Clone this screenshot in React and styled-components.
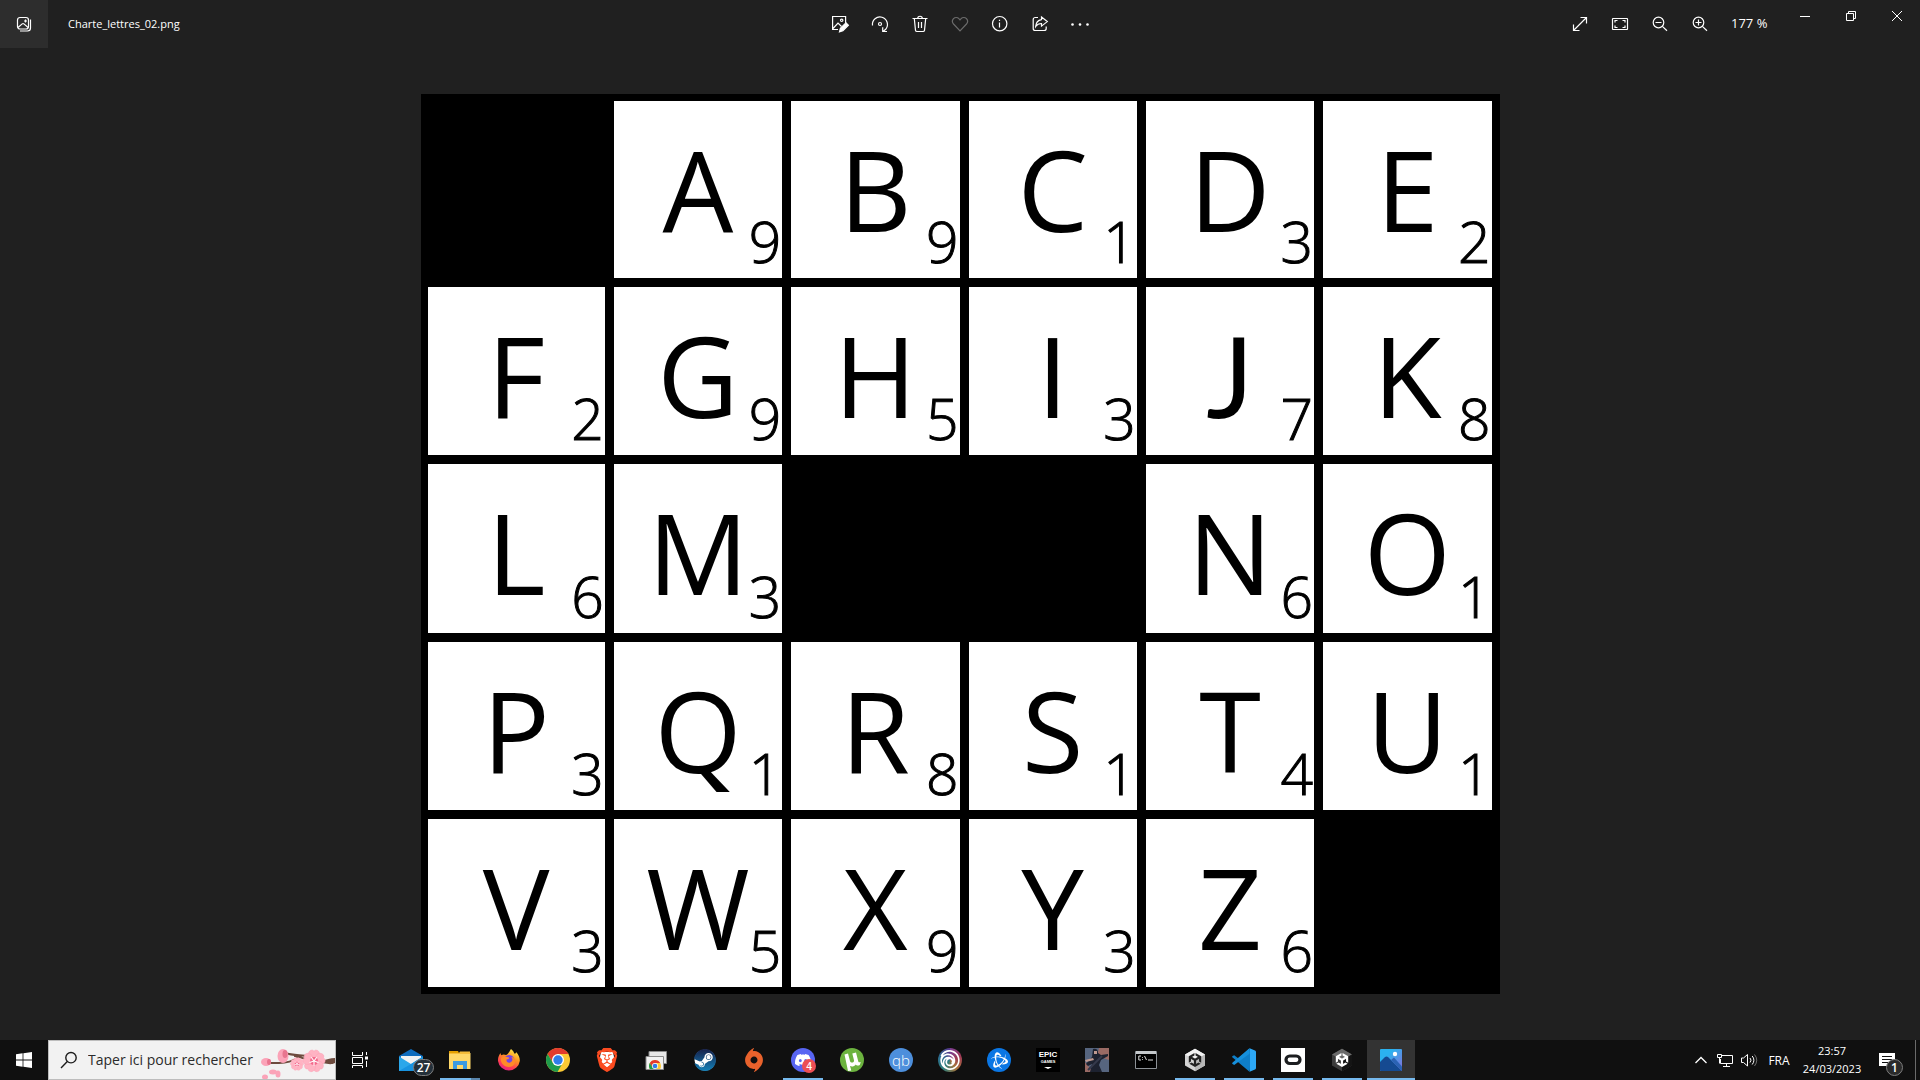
import React from "react";
import styled, { createGlobalStyle, css } from "styled-components";
import { SiSteam, SiDiscord, SiUbisoft, SiBattledotnet, SiUnity, SiBrave, SiOrigin } from "react-icons/si";

const GlobalStyle = createGlobalStyle`
  * { box-sizing: border-box; }
  body { margin: 0; background: #202020; }
  button, input { font: inherit; color: inherit; border: 0; background: none; padding: 0; margin: 0; }
`;

const Desktop = styled.div`
  min-height: 100vh;
  display: flex;
  flex-direction: column;
  background: #202020;
  color: #fff;
  font-family: "Open Sans", "Noto Sans", sans-serif;
  font-size: 12px;
`;

/* ---------- Photo viewer ---------- */

const TitleBar = styled.header`
  display: grid;
  grid-template-columns: 1fr auto 1fr;
  height: 48px;
`;

const TitleGroup = styled.div`
  display: flex;
  align-items: center;
  gap: 20px;
`;

const FileName = styled.span`
  font-size: 11px;
  line-height: 16px;
`;

const Tools = styled.nav`
  display: flex;
  justify-content: ${(p) => (p.$end ? "flex-end" : "center")};
`;

const ToolButton = styled.button`
  width: ${(p) => (p.$wide ? 48 : 40)}px;
  height: 48px;
  display: grid;
  place-items: center;
  background: ${(p) => (p.$lit ? "#2d2d2d" : "transparent")};
  color: ${(p) => (p.$dim ? "#6b6b6b" : "#fff")};
`;

const ZoomLevel = styled.output`
  width: 62px;
  padding-left: 11px;
  line-height: 46px;
  font-size: 13px;
`;

const WindowButton = styled.button`
  width: 46px;
  height: 32px;
  display: grid;
  place-items: center;
`;

const Viewer = styled.main`
  flex: 1;
  display: grid;
  place-items: center;
`;

const Board = styled.section`
  height: calc(100vh - 180px);
  aspect-ratio: 1079 / 900;
  display: grid;
  grid-template-columns: 177fr repeat(5, 168fr);
  grid-template-rows: 177fr repeat(4, 168fr);
  gap: 9px;
  padding: 7px 8px 7px 7px;
  background: #000;
`;

const Tile = styled.div`
  display: grid;
  min-width: 0;
  min-height: 0;
  background: ${(p) => (p.$blank ? "#000" : "#fff")};
  color: #000;
`;

const Letter = styled.span`
  grid-area: 1 / 1;
  justify-self: center;
  align-self: start;
  padding-top: 8px;
  font-family: ${(p) => (p.$shortTail ? "Lato" : '"Open Sans"')}, sans-serif;
  font-size: 112px;
  line-height: 160px;
`;

const Points = styled.span`
  grid-area: 1 / 1;
  justify-self: end;
  align-self: end;
  padding: 0 1px 1px 0;
  font-size: 57px;
  font-weight: 300;
  line-height: 72px;
  -webkit-text-stroke: 1px #000;
`;

/* ---------- Taskbar ---------- */

const Taskbar = styled.footer`
  height: 40px;
  display: flex;
  background: #101010;
`;

const SearchBox = styled.label`
  width: 288px;
  display: flex;
  align-items: center;
  padding-left: 11px;
  border: 1px solid #bdbdbd;
  background: #f2f2f2;
  color: #1c1c1c;
  overflow: hidden;
  svg { flex: none; }
`;

const SearchInput = styled.input`
  flex: 1;
  min-width: 0;
  margin-left: 10px;
  font-size: 14px;
  line-height: 24px;
  outline: 0;
  &::placeholder { color: #2b2b2b; opacity: 1; }
`;

const TaskSlot = styled.button`
  width: 48px;
  height: 40px;
  display: grid;
  place-items: center;
`;

const AppList = styled.nav`
  flex: 1;
  display: flex;
  gap: 1px;
  padding-left: 3px;
`;

const AppButton = styled(TaskSlot)`
  position: relative;
  background: ${(p) => (p.$active ? "#333" : "transparent")};
  ${(p) =>
    p.$running &&
    css`
      &::after {
        content: "";
        position: absolute;
        bottom: 0;
        left: ${p.$active ? 0 : 4}px;
        right: ${p.$active ? 0 : 4}px;
        height: 2px;
        background: ${p.$stacked
          ? "linear-gradient(90deg, #76b9ed 31px, #5a86ad 31px)"
          : "#76b9ed"};
      }
    `}
`;

const AppIcon = styled.span`
  display: grid;
  place-items: center;
  width: 24px;
  height: 24px;
  border-radius: ${(p) => (p.$round ? "50%" : "0")};
  background: ${(p) => p.$bg || "transparent"};
  color: ${(p) => p.$fg || "#fff"};
`;

const QbText = styled.span`
  font-size: 15px;
  font-weight: 300;
  line-height: 20px;
`;

const EpicText = styled.span`
  display: grid;
  justify-items: center;
  font: 700 8px/9px "Liberation Sans", sans-serif;
  small { font-size: 4px; line-height: 5px; }
`;

const Count = styled.span`
  position: absolute;
  display: grid;
  place-items: center;
  font-weight: 600;
  ${(p) =>
    p.$kind === "mail"
      ? css`left: 26px; top: 19px; width: 21px; height: 17px; border-radius: 9px; border: 1px solid #7d7d7d; background: #24303a; font-size: 12px; line-height: 14px;`
      : p.$kind === "chat"
      ? css`left: 23px; top: 19px; width: 14px; height: 14px; border-radius: 50%; background: #ed4f55; font-size: 10px; line-height: 14px;`
      : css`left: 19px; top: 19px; width: 17px; height: 17px; border-radius: 50%; border: 1px solid #7d7d7d; background: #2a2a2a; font-size: 12px; line-height: 14px;`}
`;

const Tray = styled.div`
  display: flex;
  align-items: center;
`;

const TrayButton = styled.button`
  width: 24px;
  height: 40px;
  display: grid;
  place-items: center;
`;

const Language = styled.button`
  width: 36px;
  height: 40px;
  font-size: 12px;
`;

const Clock = styled.time`
  width: 70px;
  text-align: center;
  font-size: 11px;
  line-height: 18px;
`;

const NoticeButton = styled(TaskSlot)`
  position: relative;
  width: 48px;
  padding-right: 8px;
`;

const ShowDesktop = styled.button`
  width: 5px;
  height: 40px;
  border-left: 1px solid #6a6a6a;
`;

/* ---------- Line icons ---------- */

const Line = ({ size = 20, w = 1, children }) => (
  <svg width={size} height={size} viewBox={`0 0 ${size} ${size}`} fill="none" stroke="currentColor" strokeWidth={w} aria-hidden="true">
    {children}
  </svg>
);

const icons = {
  gallery: (
    <Line w={1.2}>
      <rect x="3.5" y="3.5" width="11" height="11.5" rx="2.5" />
      <path d="M16.5 5.5v8.5a3 3 0 0 1-3 3H6M4 13.5l4.2-3.6a1.3 1.3 0 0 1 1.7 0l4.2 3.6" />
      <path d="M11.5 5.5v3M10 7h3" />
    </Line>
  ),
  edit: (
    <Line w={1.2}>
      <path d="M8 15.5H2.6v-13h13V9M3 14.5l5-5.5 3.5 3.5" />
      <circle cx="11.7" cy="6.3" r="1.2" />
      <path d="m9.5 17.8.9-3.4 5.6-5.5 2.4 2.4-5.5 5.5-3.4 1z" fill="currentColor" />
    </Line>
  ),
  rotate: (
    <Line w={1.2}>
      <path d="M2.5 11.5a7.5 7.5 0 1 1 13.2 3.8l-2.7 2.2M12.7 13.3v4.2H17" />
      <circle cx="10" cy="10" r="1.5" />
    </Line>
  ),
  trash: (
    <Line w={1.2}>
      <path d="M2.5 4.5h15M7.7 4.5c0-3 4.6-3 4.6 0M4.3 4.5l1.2 11.8a1.5 1.5 0 0 0 1.5 1.2h6a1.5 1.5 0 0 0 1.5-1.2l1.2-11.8M8.5 8v6M11.5 8v6" />
    </Line>
  ),
  heart: (
    <Line w={1.2}>
      <path d="M10 16.8 3.5 10a4 4 0 0 1 0-5.3c1.5-1.6 4-1.6 5.4 0L10 5.9l1.1-1.2c1.4-1.6 3.9-1.6 5.4 0a4 4 0 0 1 0 5.3z" />
    </Line>
  ),
  info: (
    <Line w={1.2}>
      <circle cx="9.7" cy="9.7" r="7.2" />
      <path d="M9.5 8.5v5M9.5 5.7v1.3" />
    </Line>
  ),
  share: (
    <Line w={1.2}>
      <path d="M8 3.5H5.2a2 2 0 0 0-2 2v9a2 2 0 0 0 2 2h9a2 2 0 0 0 2-2v-2" />
      <path d="M11.5 3 17.3 7.6l-5.8 4.5V9.5c-2.7 0-4.4.8-5.8 2.9.3-4 2.3-6.3 5.8-6.8z" />
    </Line>
  ),
  more: (
    <Line>
      <g fill="currentColor" stroke="none">
        <circle cx="2.5" cy="10.5" r="1.3" /><circle cx="10" cy="10.5" r="1.3" /><circle cx="17.5" cy="10.5" r="1.3" />
      </g>
    </Line>
  ),
  expand: (
    <Line w={1.2}><path d="M3.5 16.5l13-13M10.5 3.5h6v6M3.5 10.5v6h6" /></Line>
  ),
  fit: (
    <Line w={1.2}>
      <rect x="2.5" y="4.5" width="15" height="11" rx=".5" />
      <path d="M5 8.5v-2h2.5M12.5 6.5H15v2M15 11.5v2h-2.5M7.5 13.5H5v-2" />
    </Line>
  ),
  zoomOut: (
    <Line w={1.2}><circle cx="8.5" cy="8.5" r="5.3" /><path d="m12.4 12.4 4.6 4.4M5.5 8.5h6" /></Line>
  ),
  zoomIn: (
    <Line w={1.2}><circle cx="8.5" cy="8.5" r="5.3" /><path d="m12.4 12.4 4.6 4.4M5.5 8.5h6M8.5 5.5v6" /></Line>
  ),
  minimize: <Line size={10}><path d="M0 5.5h10" /></Line>,
  restore: <Line size={10}><path d="M.5 2.5h7v7h-7zM2.5 2.5v-2h7v7h-2" /></Line>,
  close: <Line size={10}><path d="m0 0 10 10M10 0 0 10" /></Line>,
  search: <Line size={18} w={1.4}><circle cx="11" cy="6.7" r="5.2" /><path d="M7.3 10.6 1 17" /></Line>,
  taskView: (
    <Line size={18}>
      <path d="M1.5 1v3.5h10V1M1.5 17v-2.5h10V17M1.5 6.5h10v6h-10zM15.5 1v3M15.5 10v6" />
      <path d="M14 5.5h3v3h-3z" fill="currentColor" stroke="none" />
    </Line>
  ),
  chevron: <Line size={14} w={1.3}><path d="m1.5 10 5.5-5.5 5.5 5.5" /></Line>,
  network: (
    <Line size={18}>
      <path d="M5.5 4.5h11v8h-12V8M10.5 12.5v3M7 15.5h7M1.5 3.5h4v3h-4zM3.5 6.5v6" />
    </Line>
  ),
  volume: (
    <Line size={18}>
      <path d="M1.5 7v4.5h2l4 3.5V3.5l-4 3.5zM10 7q2 2.2 0 4.5M12.2 5q3.4 4.2 0 8.5" />
      <path d="M14.5 3.5q4.5 5.7 0 11.5" opacity=".4" />
    </Line>
  ),
  notice: (
    <Line size={18}>
      <path d="M1 2h16v13h-4v3l-3-3H1z" fill="#fff" stroke="none" />
      <path d="M4 5.5h10M4 8.5h10M4 11.5h6" stroke="#101010" />
    </Line>
  ),
};

/* ---------- App drawings ---------- */

const Art = ({ w = 24, h = 24, children }) => (
  <svg width={w} height={h} viewBox={`0 0 ${w} ${h}`} aria-hidden="true">{children}</svg>
);

const WindowsLogo = () => (
  <Art w={16} h={16}>
    <path fill="#fff" d="M0 2.2 6.6 1.3V7.6H0zM7.4 1.2 16 0v7.6H7.4zM0 8.4h6.6v6.3L0 13.8zM7.4 8.4H16V16l-8.6-1.2z" />
  </Art>
);

const petals = [0, 72, 144, 216, 288];

const Flower = ({ x, y, r }) => (
  <g transform={`translate(${x} ${y}) scale(${r})`}>
    {petals.map((a) => (
      <path key={a} transform={`rotate(${a})`} d="M0 0C-.7-.3-.6-1-.15-1L0-.9.15-1C.6-1 .7-.3 0 0" fill="#ffb3c3" stroke="#fa9fb4" strokeWidth=".04" />
    ))}
    <circle r=".36" fill="#f4688b" />
    {petals.map((a) => (
      <path key={a} transform={`rotate(${a + 36})`} d="M0 0V-.42" stroke="#fff" strokeWidth=".1" />
    ))}
  </g>
);

const Blossom = () => (
  <Art w={74} h={38}>
    <path d="M74 19c-8 3-14 0-20 1-10 1-14-6-21-5M56 19C46 12 36 16 24 12M38 16c-6 4-12 6-20 6H8" fill="none" stroke="#6d4b3e" strokeWidth="2" />
    <path d="M74 17c-5 0-9 2-12 2v3c5 1 8 2 12 0z" fill="#6d4b3e" />
    <g fill="#fba3b8">
      <ellipse cx="5" cy="21" rx="5" ry="4" />
      <ellipse cx="22" cy="15" rx="5.5" ry="7" />
      <ellipse cx="24" cy="13" rx="2.5" ry="4" fill="#e8758f" />
      <ellipse cx="8" cy="21" rx="2" ry="3" fill="#e8758f" />
      <ellipse cx="12" cy="31" rx="4" ry="2.5" /><ellipse cx="17" cy="33" rx="2.5" ry="3.5" />
      <ellipse cx="4" cy="36" rx="3" ry="2.5" />
    </g>
    <Flower x={36} y={23} r={6.5} />
    <Flower x={53} y={20} r={11} />
  </Art>
);

const Mail = () => (
  <Art>
    <path d="M0 8 12 1l12 7v3H0z" fill="#0f6cbd" />
    <path d="M2 8h20v8H2z" fill="#f2f2f2" />
    <path d="M0 8.5 12 16l12-7.5V23H0z" fill="#2ba7ea" />
    <path d="M0 23 12 16l12-7.5V23z" fill="#1893e0" />
  </Art>
);

const Folder = () => (
  <Art>
    <path d="M1 3h9l1 2H1z" fill="#e5a000" />
    <path d="M1 5h21.5v16H1z" fill="#ffd869" />
    <path d="M1 5h10l1-1.5h10V6H1z" fill="#f5bd3a" />
    <path d="M5 21v-8h14v8h-4v-4H9v4z" fill="#3d9be0" />
  </Art>
);

const Firefox = () => (
  <Art>
    <defs>
      <linearGradient id="fx" x1=".8" y1="0" x2=".3" y2="1">
        <stop offset="0" stopColor="#fff04a" /><stop offset=".4" stopColor="#ff9620" /><stop offset=".75" stopColor="#ff3d52" /><stop offset="1" stopColor="#e21d86" />
      </linearGradient>
    </defs>
    <path d="M14 1c2 1.5 3 3 3.2 4.5C19 6 19 4.5 19 4c3 3 4 6 3.8 9A11 11 0 0 1 1 13C.8 9.5 2 7 3.5 5c0 1 .3 1.6.9 2.2C6 6 8 6.5 9 7c2 0 3-3 5-6z" fill="url(#fx)" />
    <circle cx="12.2" cy="12.2" r="5.2" fill="#7543e3" />
    <path d="M4 10c3-3 6-1 8-.5 1 1-1 2-2.5 2C9 15 13 16 15 13c1-2 0-3.500-1-4 4 0 5 4 3.500 7-2 4-9 4-12 0-1.500-2-2-4-1.500-6z" fill="#ff8a28" />
  </Art>
);

const Chrome = () => (
  <g>
    <circle cx="12" cy="12" r="12" fill="#fcc934" />
    <path d="M1.6 6A12 12 0 0 1 22.4 6H12L7 15z" fill="#e33b2e" />
    <path d="M1.6 6A12 12 0 0 0 11.5 24l5.3-9.2L7 15z" fill="#1e9b4b" />
    <circle cx="12" cy="12" r="6" fill="#fff" />
    <circle cx="12" cy="12" r="4.7" fill="#2f7de9" />
  </g>
);

const RemoteDesktop = () => (
  <Art>
    <path d="M5 3.5h17.5v12H5z" fill="#e6e6e6" stroke="#8b8b8b" />
    <path d="M2 8.5h17.5v13H2z" fill="#f2f2f2" stroke="#8b8b8b" />
    <svg x="5" y="12" width="12" height="9" viewBox="0 0 24 18"><Chrome /></svg>
  </Art>
);

const Brave = () => (
  <Art>
    <path d="M6 4h12l2 10-8 7-8-7z" fill="#fff" />
    <SiBrave size={24} color="#fb4b20" />
  </Art>
);

const Steam = () => (
  <Art>
    <defs>
      <linearGradient id="st" x1="0" y1="0" x2="0" y2="1"><stop offset="0" stopColor="#16204a" /><stop offset="1" stopColor="#1380b8" /></linearGradient>
    </defs>
    <circle cx="12" cy="12" r="10.5" fill="#fff" />
    <SiSteam x="1" y="1" size={22} style={{ fill: "url(#st)" }} />
  </Art>
);

const UTorrent = () => (
  <Art>
    <circle cx="12" cy="12" r="12" fill="#6cb33f" />
    <path d="m4.5 6.5 3.5-1 2 7.5c.6 2.4 4.5 1.8 4-.8L12.3 5.5l3.7-1 2.3 9c.3 1 1.5 1 2.5.5l-1 3c-1.8 1-3.4.6-4-.6-1.6 2-3.8 2.5-5.8 1.6l1.3 4.5-3.3.5z" fill="#fff" />
  </Art>
);

const Terminal = () => (
  <Art>
    <path d="M1.5 3.5h21v17h-21z" fill="#000" stroke="#8d9297" />
    <path d="M2 3h20v3H2z" fill="#c5c9cc" />
    <path d="M7 8H4.8v4H7M8.5 9v.8M8.5 11v.8M10.5 8l2 4M14 12h5" fill="none" stroke="#ddd" />
  </Art>
);

const GameArt = () => (
  <Art>
    <path d="M0 0h24v24H0z" fill="#56657f" />
    <path d="M14 0h10v12L12 8zM0 14l8 10H0z" fill="#9a6a64" />
    <path d="M8 1q5-1 5 4l3 2 7-1v2l-7 4-2 5 3 7H5l2-8-4 2-2-2 6-7z" fill="#1d2230" />
    <path d="M9 3h3v3H9zM0 12l8-2 1 2-8 2z" fill="#bf9a91" />
    <path d="M3 22 17 8" stroke="#35394b" strokeWidth="2" />
  </Art>
);

const UnityHex = ({ dark }) => (
  <Art>
    <path d="m12 .8 10 5.6v11.2l-10 5.6-10-5.6V6.4z" fill={dark ? "#3c3c3c" : "#d4d4d4"} />
    <path d="m12 .8 10 5.6-10 5.6L2 6.4z" fill={dark ? "#6b6b6b" : "#f2f2f2"} />
    <path d="m22 6.4-10 5.6v11.2l10-5.6z" fill={dark ? "#141414" : "#b8b8b8"} />
    <SiUnity x="5" y="5" size={14} style={{ fill: dark ? "#fff" : "#222" }} />
  </Art>
);

const VsCode = () => (
  <Art>
    <path d="M17.5.2 6.5 10.5 2.2 7.2.6 8a1 1 0 0 0 0 1.6L17.5 23.8l1-5.3V5.5z" fill="#0e7ec8" />
    <path d="M.6 16 2.2 17 17.5 5.8V.2L.6 14.5a1 1 0 0 0 0 1.5z" fill="#1690dc" />
    <path d="M17 0l6 2.4c.6.3 1 .8 1 1.5v16.2c0 .7-.4 1.2-1 1.5L17 24c.6-.3 1-.8 1-1.5v-21C18 .8 17.6.3 17 0z" fill="#2ca7f5" />
  </Art>
);

const Oculus = () => (
  <Art>
    <path d="M0 0h24v24H0z" fill="#fff" />
    <rect x="5" y="8" width="14" height="7.5" rx="3.75" fill="none" stroke="#1c1e20" strokeWidth="3.2" />
  </Art>
);

const Photos = () => (
  <Art>
    <defs><linearGradient id="ph" x1="0" y1="0" x2="1" y2="1"><stop offset=".3" stopColor="#2bb2ef" /><stop offset="1" stopColor="#8a6bd8" /></linearGradient></defs>
    <rect x="1" y="1" width="22" height="22" rx="1" fill="url(#ph)" />
    <path d="m1 14 5-5q1.5-1 3 0l14 14H2q-1 0-1-1z" fill="#154a91" />
    <path d="m12 12 3-2.5 8 9V23z" fill="#2b62b3" />
    <circle cx="16" cy="6" r="2.2" fill="#fff" />
  </Art>
);

const EpicShield = () => (
  <AppIcon $bg="#000">
    <EpicText>EPIC<small>GAMES</small></EpicText>
    <Art w={8} h={3}><path d="M0 0h8L4 2z" fill="#fff" /></Art>
  </AppIcon>
);

/* ---------- Content ---------- */

const rows = [
  [null, "A9", "B9", "C1", "D3", "E2"],
  ["F2", "G9", "H5", "I3", "J7", "K8"],
  ["L6", "M3", null, null, "N6", "O1"],
  ["P3", "Q1", "R8", "S1", "T4", "U1"],
  ["V3", "W5", "X9", "Y3", "Z6", null],
];

const tools = [
  ["Modifier", "edit"],
  ["Faire pivoter", "rotate"],
  ["Supprimer", "trash"],
  ["Favori", "heart"],
  ["Informations", "info"],
  ["Partager", "share"],
  ["Plus", "more"],
];

const zoomTools = [
  ["Plein écran", "expand"],
  ["Ajuster", "fit"],
  ["Zoom arrière", "zoomOut"],
  ["Zoom avant", "zoomIn"],
];

const windowTools = [
  ["Réduire", "minimize"],
  ["Restaurer", "restore"],
  ["Fermer", "close"],
];

const apps = [
  { name: "Courrier", art: <Mail />, count: "27", kind: "mail" },
  { name: "Explorateur", art: <Folder />, running: true, stacked: true },
  { name: "Firefox", art: <Firefox /> },
  { name: "Chrome", art: <Art><Chrome /></Art> },
  { name: "Brave", art: <Brave /> },
  { name: "Bureau à distance", art: <RemoteDesktop /> },
  { name: "Steam", art: <Steam /> },
  { name: "Origin", art: <SiOrigin size={24} color="#e8622c" /> },
  { name: "Discord", art: <AppIcon $round $bg="#5865f2"><SiDiscord size={16} /></AppIcon>, running: true, count: "4", kind: "chat" },
  { name: "uTorrent", art: <UTorrent /> },
  { name: "qBittorrent", art: <AppIcon $round $bg="#4d8fdc"><QbText>qb</QbText></AppIcon> },
  { name: "Ubisoft", art: <AppIcon $round $bg="conic-gradient(#7b3f94, #a03a55, #a8743b, #2f7f7c, #2b6c8f, #57348a)"><SiUbisoft size={20} /></AppIcon> },
  { name: "Battle.net", art: <AppIcon $round $bg="#0a76e4"><SiBattledotnet size={17} /></AppIcon> },
  { name: "Epic Games", art: <EpicShield /> },
  { name: "Jeu", art: <GameArt /> },
  { name: "Invite de commandes", art: <Terminal /> },
  { name: "Unity Hub", art: <UnityHex />, running: true },
  { name: "Visual Studio Code", art: <VsCode />, running: true },
  { name: "Oculus", art: <Oculus />, running: true },
  { name: "Unity", art: <UnityHex dark />, running: true },
  { name: "Photos", art: <Photos />, running: true, active: true },
];

export default function App() {
  return (
    <Desktop>
      <GlobalStyle />
      <TitleBar>
        <TitleGroup>
          <ToolButton $wide $lit aria-label="Galerie">{icons.gallery}</ToolButton>
          <FileName>Charte_lettres_02.png</FileName>
        </TitleGroup>
        <Tools>
          {tools.map(([label, icon]) => (
            <ToolButton key={icon} aria-label={label} $dim={icon === "heart"}>{icons[icon]}</ToolButton>
          ))}
        </Tools>
        <Tools $end>
          {zoomTools.map(([label, icon]) => (
            <ToolButton key={icon} aria-label={label}>{icons[icon]}</ToolButton>
          ))}
          <ZoomLevel>177 %</ZoomLevel>
          {windowTools.map(([label, icon]) => (
            <WindowButton key={icon} aria-label={label}>{icons[icon]}</WindowButton>
          ))}
        </Tools>
      </TitleBar>

      <Viewer>
        <Board>
          {rows.flat().map((cell, i) =>
            cell ? (
              <Tile key={i}>
                <Letter $shortTail={cell[0] === "J"}>{cell[0]}</Letter>
                <Points>{cell[1]}</Points>
              </Tile>
            ) : (
              <Tile key={i} $blank />
            )
          )}
        </Board>
      </Viewer>

      <Taskbar>
        <TaskSlot aria-label="Démarrer"><WindowsLogo /></TaskSlot>
        <SearchBox>
          {icons.search}
          <SearchInput type="text" aria-label="Rechercher" placeholder="Taper ici pour rechercher" />
          <Blossom />
        </SearchBox>
        <TaskSlot aria-label="Vue des tâches">{icons.taskView}</TaskSlot>
        <AppList>
          {apps.map((a) => (
            <AppButton key={a.name} aria-label={a.name} $running={a.running} $stacked={a.stacked} $active={a.active}>
              {a.art}
              {a.count && <Count $kind={a.kind}>{a.count}</Count>}
            </AppButton>
          ))}
        </AppList>
        <Tray>
          <TrayButton aria-label="Icônes cachées">{icons.chevron}</TrayButton>
          <TrayButton aria-label="Réseau">{icons.network}</TrayButton>
          <TrayButton aria-label="Volume">{icons.volume}</TrayButton>
          <Language>FRA</Language>
          <Clock>23:57<br />24/03/2023</Clock>
          <NoticeButton aria-label="Notifications">
            {icons.notice}
            <Count $kind="notice">1</Count>
          </NoticeButton>
          <ShowDesktop aria-label="Afficher le bureau" />
        </Tray>
      </Taskbar>
    </Desktop>
  );
}
